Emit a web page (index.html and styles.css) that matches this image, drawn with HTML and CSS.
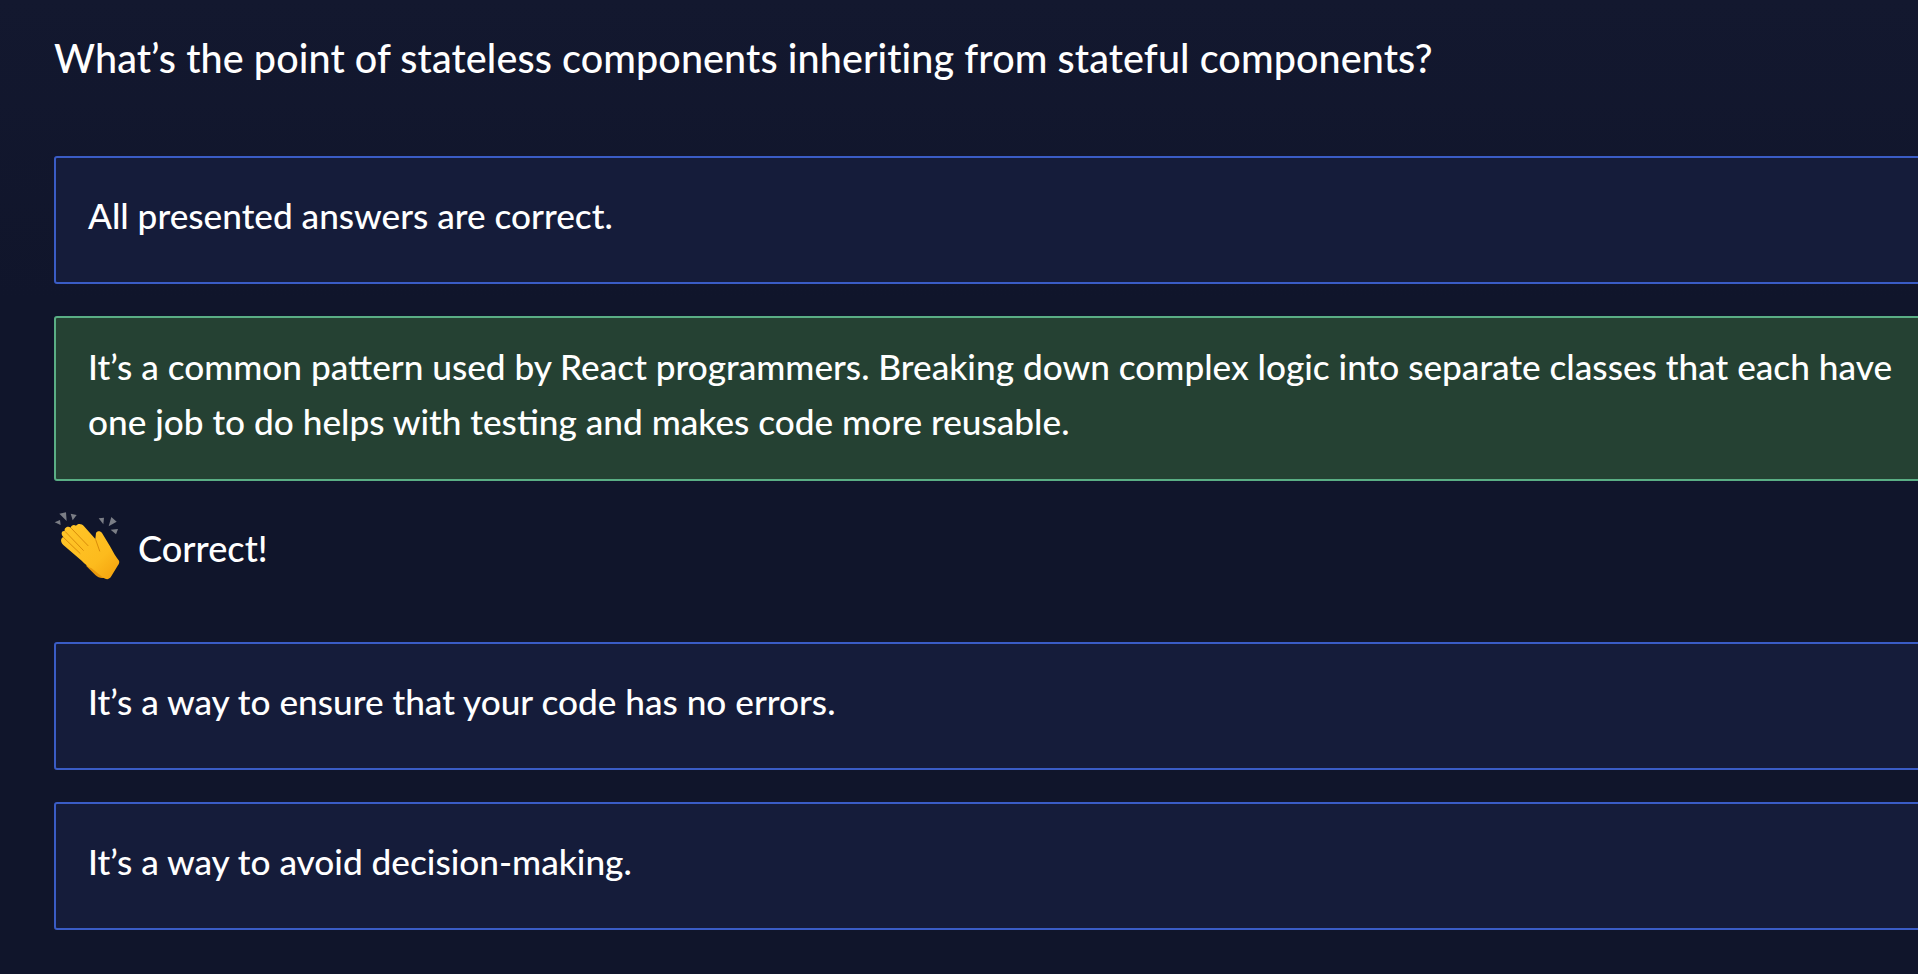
FILE: index.html
```html
<!DOCTYPE html>
<html lang="en">
<head>
<meta charset="utf-8">
<title>Quiz</title>
<link rel="stylesheet" href="styles.css">
</head>
<body>
<main class="quiz">
  <h1 class="question">What’s the point of stateless components inheriting from stateful components?</h1>
  <div class="answers">
    <div class="answer">All presented answers are correct.</div>
    <div class="group">
      <div class="answer answer-correct"><span>It’s a common pattern used by React programmers. Breaking down complex logic into separate classes that each have one job to do helps with testing and makes code more reusable.</span></div>
      <div class="feedback">
        <svg class="clap" viewBox="12 9 204 204" aria-hidden="true">
          <defs>
            <linearGradient id="hand" x1="0" y1="0" x2="1" y2="1">
              <stop offset="0" stop-color="#ffc62a"/>
              <stop offset="0.65" stop-color="#fdbb1d"/>
              <stop offset="1" stop-color="#f39f0c"/>
            </linearGradient>
          </defs>
          <g fill="#7b7e86">
            <path d="M14 40l16-7 2 15z"/><path d="M28 14l20-4 2 26z"/><path d="M62 14l18 4-12 16z"/>
            <path d="M146 28l16-2-2 20z"/><path d="M184 24l16 14-24 14z"/><path d="M182 62l22-2-6 16z"/>
          </g>
          <path fill="#e8980c" d="M108 170l28 28c8 8 18 10 26 8l12-12-30-46z"/>
          <path fill="url(#hand)" d="M78 50C84 42 96 44 102 52L136 90 138 72C142 64 152 66 156 72L180 112C190 130 198 145 207 155 209 160 207 165 203 170L182 205C176 212 168 212 160 206L125 178C115 174 105 165 95 155L40 108C30 98 32 88 40 84 32 76 34 64 44 66 42 56 54 50 62 56 64 48 72 46 78 50Z"/>
          <g fill="none" stroke="#d98c0a" stroke-width="3" stroke-linecap="round">
            <path d="M64 58l50 52"/>
            <path d="M46 68l54 56"/>
            <path d="M40 85l50 48"/>
            <path d="M137 92l12 34"/>
          </g>
        </svg>
        <span class="feedback-text">Correct!</span>
      </div>
    </div>
    <div class="answer">It’s a way to ensure that your code has no errors.</div>
    <div class="answer">It’s a way to avoid decision-making.</div>
  </div>
</main>
</body>
</html>
```
FILE: styles.css
```css
html, body {
  margin: 0;
  height: 100%;
  overflow: hidden;
}
body {
  background: linear-gradient(#13182f, #10152b 300px);
  color: #fff;
  font-family: "Lato", "Liberation Sans", sans-serif;
}
.quiz {
  width: 2000px;
  padding: 30px 0 0 54px;
  box-sizing: border-box;
}
.question {
  margin: 0 0 71px;
  font-size: 39.5px;
  line-height: 55px;
  font-weight: 500;
  letter-spacing: 0.1px;
}
.answers {
  display: flex;
  flex-direction: column;
  gap: 32px;
}
.answer {
  display: flex;
  align-items: center;
  box-sizing: border-box;
  width: 1930px;
  min-height: 128px;
  padding: 21px 32px 31px;
  font-size: 35.2px;
  line-height: 55px;
  font-weight: 500;
  background: #151c3a;
  border: 2px solid #3a5cc5;
  border-radius: 3px;
}
.answer-correct {
  padding-bottom: 30px;
  background: #254133;
  border-color: #5aae85;
}
.feedback {
  display: flex;
  align-items: center;
  gap: 16px;
  margin: 31px 0 30px;
}
.clap {
  width: 68px;
  height: 68px;
  display: block;
}
.feedback-text {
  padding-top: 4px;
  font-size: 36.2px;
  line-height: 55px;
  font-weight: 500;
}
```
